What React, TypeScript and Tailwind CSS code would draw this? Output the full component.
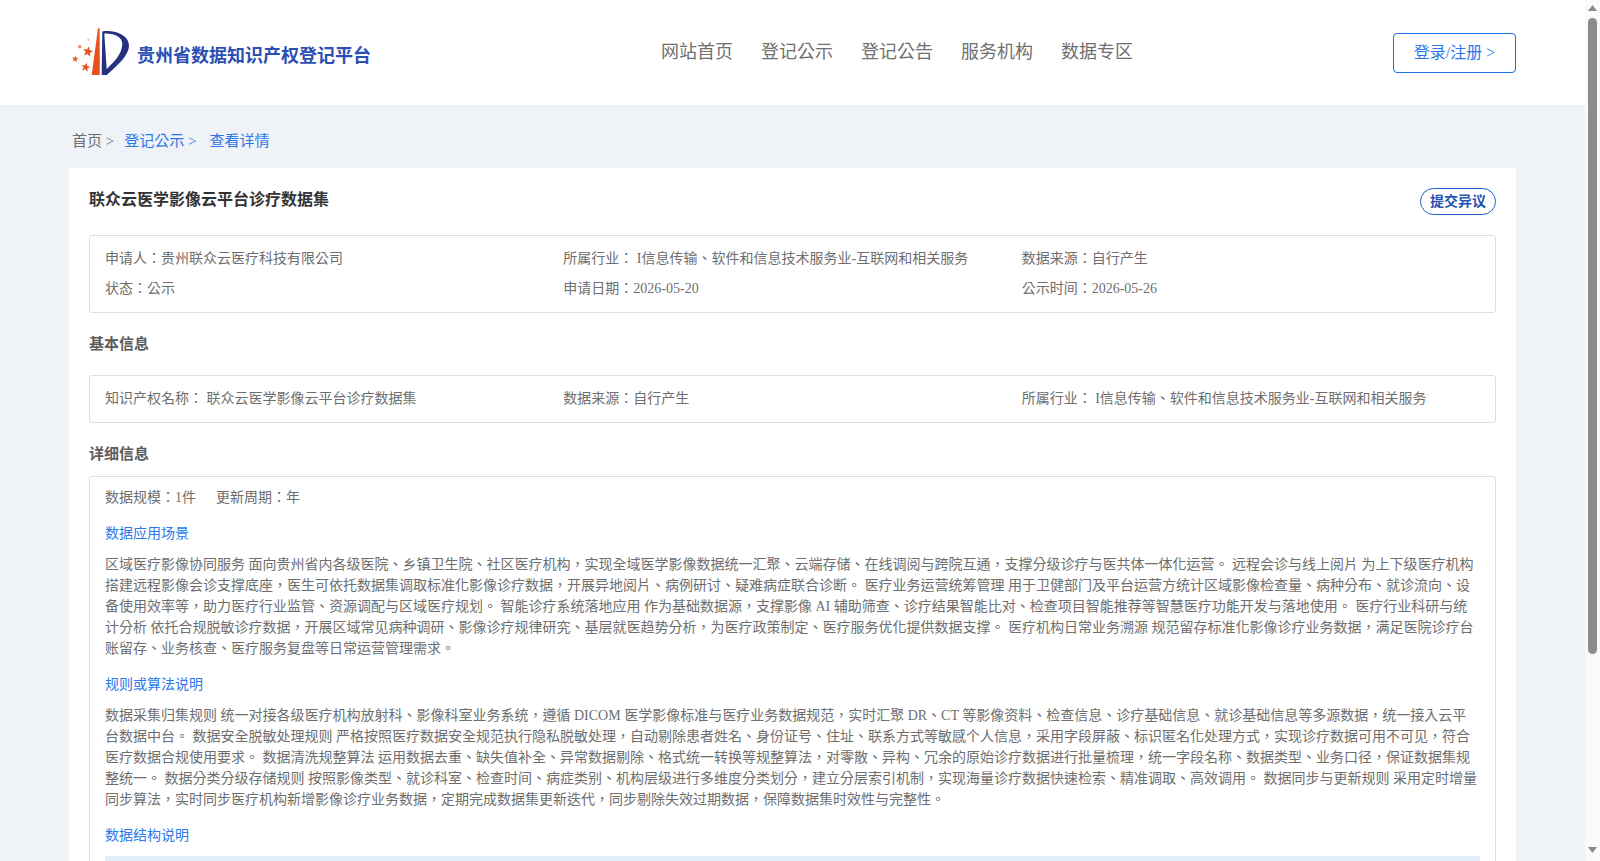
import React from 'react';

const star = (cx: number, cy: number, r: number) => {
  const pts: string[] = [];
  for (let i = 0; i < 10; i++) {
    const rad = i % 2 === 0 ? r : r * 0.42;
    const a = (Math.PI / 5) * i - Math.PI / 2 + 0.2;
    pts.push(`${(cx + rad * Math.cos(a)).toFixed(2)},${(cy + rad * Math.sin(a)).toFixed(2)}`);
  }
  return pts.join(' ');
};

const Logo = () => (
  <svg width="60" height="52" viewBox="0 0 60 52" className="shrink-0">
    <path d="M27 1.3 L28.6 1.3 L28.8 48 L20.7 48 Z" fill="#e8501f" />
    <path
      d="M31.3 4.5 L33.3 4 C47 3.5 58 9 58 18.7 C58 28 47 38 35.7 48 L30.7 48 Z M33.3 6.5 L35.7 42 C43 35 51 27 51.3 17 C51.5 10 43 6 33.3 6.5 Z"
      fill="#26307f"
      fillRule="evenodd"
    />
    <polygon points={star(17, 24.7, 5.5)} fill="#e8501f" />
    <polygon points={star(14.7, 40.3, 4.8)} fill="#e8501f" />
    <polygon points={star(4.2, 32, 3.4)} fill="#e8501f" />
    <circle cx="8.7" cy="19.7" r="1.7" fill="#ee8a63" />
    <circle cx="17.3" cy="12.7" r="1" fill="#f0a98c" />
  </svg>
);

const navItems = ['网站首页', '登记公示', '登记公告', '服务机构', '数据专区'];

const Header = () => (
  <header className="flex h-[105px] items-center bg-white pl-[71px] pr-[69px]">
    <div className="flex items-center">
      <Logo />
      <span className="ml-[6px] mt-[8px] text-[18px] font-bold text-[#2b4fb5]">贵州省数据知识产权登记平台</span>
    </div>
    <nav className="ml-[290px] flex gap-[28px] text-[18px] text-[#707070]">
      {navItems.map((n) => (
        <a key={n}>{n}</a>
      ))}
    </nav>
    <button className="ml-auto h-[40px] w-[123px] rounded-[4px] border border-[#1a6fe8] pt-[1px] text-[16px] text-[#2a78ea]">
      登录/注册 &gt;
    </button>
  </header>
);

const InfoBox = ({ rows }: { rows: string[][] }) => (
  <div className="flex flex-col gap-[9px] rounded-[3px] border border-[#dddddd] px-[15px] pb-[13px] pt-[12px]">
    {rows.map((row, i) => (
      <div key={i} className="grid grid-cols-3 text-[14px] leading-[21px] text-[#6e6e6e]">
        {row.map((c) => (
          <div key={c}>{c}</div>
        ))}
      </div>
    ))}
  </div>
);

const SubTitle = ({ children, className }: { children: React.ReactNode; className: string }) => (
  <div className={`text-[14px] leading-[21px] text-[#2a78ea] ${className}`}>{children}</div>
);

const Scrollbar = () => (
  <div className="flex h-full w-[15px] shrink-0 flex-col items-center bg-[#fafafa]">
    <svg width="9" height="6" viewBox="0 0 9 6" className="mt-[5px] shrink-0">
      <path d="M4.5 0 L9 6 L0 6 Z" fill="#8a8a8a" />
    </svg>
    <div className="mt-[7px] h-[636px] w-[9px] rounded-[5px] bg-[#8c8c8c]" />
    <svg width="9" height="6" viewBox="0 0 9 6" className="mb-[8px] mt-auto shrink-0">
      <path d="M0 0 L9 0 L4.5 6 Z" fill="#8a8a8a" />
    </svg>
  </div>
);

export default function App() {
  return (
    <div className="flex h-[861px] overflow-hidden bg-[#eff2f6] font-['Liberation_Serif','Noto_Sans_CJK_TC',serif]">
      <div className="min-w-0 flex-1">
        <Header />
        <div className="mx-auto w-[1447px]">
          <div className="flex h-[63px] items-center pl-[3px] pt-[10px] text-[15px]">
            <span className="text-[#707070]">首页 &gt;</span>
            <span className="ml-[10px] text-[#2a78ea]">登记公示 &gt;</span>
            <span className="ml-[13px] text-[#2a78ea]">查看详情</span>
          </div>
          <main className="bg-white px-[20px] pb-[20px]">
            <div className="flex h-[67px] items-start justify-between">
              <h1 className="mt-[20px] text-[16px] font-bold leading-[24px] text-[#333333]">联众云医学影像云平台诊疗数据集</h1>
              <button className="mt-[20px] h-[27px] w-[76px] rounded-[14px] border border-[#1a5fd0] text-[14px] font-bold text-[#2453b3]">
                提交异议
              </button>
            </div>
            <InfoBox
              rows={[
                ['申请人：贵州联众云医疗科技有限公司', '所属行业： I信息传输、软件和信息技术服务业-互联网和相关服务', '数据来源：自行产生'],
                ['状态：公示', '申请日期：2026-05-20', '公示时间：2026-05-26'],
              ]}
            />
            <h2 className="mt-[20px] text-[15px] font-bold leading-[22px] text-[#5c5c5c]">基本信息</h2>
            <div className="mt-[20px]">
              <InfoBox
                rows={[['知识产权名称： 联众云医学影像云平台诊疗数据集', '数据来源：自行产生', '所属行业： I信息传输、软件和信息技术服务业-互联网和相关服务']]}
              />
            </div>
            <h2 className="mt-[20px] text-[15px] font-bold leading-[22px] text-[#5c5c5c]">详细信息</h2>
            <div className="mt-[11px] rounded-[3px] border border-[#dddddd] px-[15px] pb-[20px] pt-[10px] text-[14px] leading-[21px] text-[#6e6e6e]">
              <div className="flex gap-[20px]">
                <span>数据规模：1件</span>
                <span>更新周期：年</span>
              </div>
              <SubTitle className="mt-[15px]">数据应用场景</SubTitle>
              <p className="mt-[10px]">
                区域医疗影像协同服务 面向贵州省内各级医院、乡镇卫生院、社区医疗机构，实现全域医学影像数据统一汇聚、云端存储、在线调阅与跨院互通，支撑分级诊疗与医共体一体化运营。 远程会诊与线上阅片 为上下级医疗机构搭建远程影像会诊支撑底座，医生可依托数据集调取标准化影像诊疗数据，开展异地阅片、病例研讨、疑难病症联合诊断。 医疗业务运营统筹管理 用于卫健部门及平台运营方统计区域影像检查量、病种分布、就诊流向、设备使用效率等，助力医疗行业监管、资源调配与区域医疗规划。 智能诊疗系统落地应用 作为基础数据源，支撑影像 AI 辅助筛查、诊疗结果智能比对、检查项目智能推荐等智慧医疗功能开发与落地使用。 医疗行业科研与统计分析 依托合规脱敏诊疗数据，开展区域常见病种调研、影像诊疗规律研究、基层就医趋势分析，为医疗政策制定、医疗服务优化提供数据支撑。 医疗机构日常业务溯源 规范留存标准化影像诊疗业务数据，满足医院诊疗台账留存、业务核查、医疗服务复盘等日常运营管理需求。
              </p>
              <SubTitle className="mt-[15px]">规则或算法说明</SubTitle>
              <p className="mt-[10px]">
                数据采集归集规则 统一对接各级医疗机构放射科、影像科室业务系统，遵循 DICOM 医学影像标准与医疗业务数据规范，实时汇聚 DR、CT 等影像资料、检查信息、诊疗基础信息、就诊基础信息等多源数据，统一接入云平台数据中台。 数据安全脱敏处理规则 严格按照医疗数据安全规范执行隐私脱敏处理，自动剔除患者姓名、身份证号、住址、联系方式等敏感个人信息，采用字段屏蔽、标识匿名化处理方式，实现诊疗数据可用不可见，符合医疗数据合规使用要求。 数据清洗规整算法 运用数据去重、缺失值补全、异常数据剔除、格式统一转换等规整算法，对零散、异构、冗余的原始诊疗数据进行批量梳理，统一字段名称、数据类型、业务口径，保证数据集规整统一。 数据分类分级存储规则 按照影像类型、就诊科室、检查时间、病症类别、机构层级进行多维度分类划分，建立分层索引机制，实现海量诊疗数据快速检索、精准调取、高效调用。 数据同步与更新规则 采用定时增量同步算法，实时同步医疗机构新增影像诊疗业务数据，定期完成数据集更新迭代，同步剔除失效过期数据，保障数据集时效性与完整性。
              </p>
              <SubTitle className="mt-[15px]">数据结构说明</SubTitle>
              <div className="mt-[10px] h-[40px] bg-[#e3eefc]" />
            </div>
          </main>
        </div>
      </div>
      <Scrollbar />
    </div>
  );
}
